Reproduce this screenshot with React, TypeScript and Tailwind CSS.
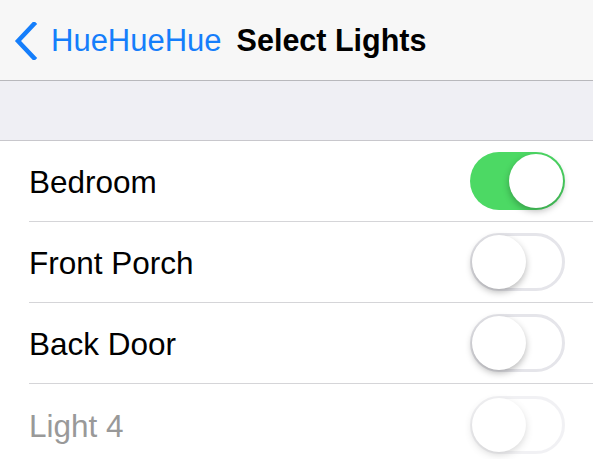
import React from "react";

function Toggle({ on, disabled }: { on: boolean; disabled?: boolean }) {
  return (
    <div className={disabled ? "opacity-50" : ""}>
      <div
        className={
          "relative w-[95px] h-[58px] rounded-full " +
          (on ? "bg-[#4cd964]" : "bg-white border-[3px] border-[#e5e5ea]")
        }
      >
        <div
          className={
            "absolute w-[54px] h-[54px] rounded-full bg-white shadow-[0_3px_7px_rgba(0,0,0,0.28)] " +
            (on ? "top-[2px] right-[2px]" : "top-[-1px] left-[-1px]")
          }
        />
      </div>
    </div>
  );
}

const rows = [
  { name: "Bedroom", on: true },
  { name: "Front Porch", on: false },
  { name: "Back Door", on: false },
  { name: "Light 4", on: false, disabled: true },
];

export default function App() {
  return (
    <div
      className="w-[593px] h-[459px] overflow-hidden bg-white"
      style={{ fontFamily: '"Liberation Sans", Arial, sans-serif' }}
    >
      <div className="h-[81px] bg-[#f7f7f7] border-b border-[#b8b8bc] flex items-center pl-[14px]">
        <svg width="24" height="38" viewBox="0 0 24 38" className="mr-[13px] mt-[1px]">
          <path d="M20 2 L4 19 L20 36" fill="none" stroke="#157efb" strokeWidth="4.5" strokeLinecap="square" />
        </svg>
        <span className="text-[31px] text-[#157efb] leading-none">HueHueHue</span>
        <span className="ml-[15px] text-[30.5px] font-bold text-black leading-none">Select Lights</span>
      </div>
      <div className="h-[60px] bg-[#efeff4] border-b border-[#c8c7cc]" />
      <div className="flex flex-col">
        {rows.map((r, i) => (
          <div key={r.name} className="pl-[29px]">
            <div
              className={
                "h-[81px] flex items-center justify-between pr-[28px] " +
                (i < rows.length - 1 ? "border-b border-[#d5d5d8]" : "")
              }
            >
              <span
                className={
                  "text-[31.5px] leading-none pt-[4px] " +
                  (r.disabled ? "text-[#999999]" : "text-black")
                }
              >
                {r.name}
              </span>
              <Toggle on={r.on} disabled={r.disabled} />
            </div>
          </div>
        ))}
      </div>
    </div>
  );
}
